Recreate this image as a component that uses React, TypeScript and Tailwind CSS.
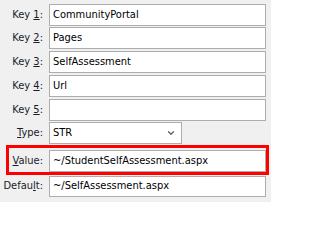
import { ChevronDown } from 'lucide-react';

const FONT = { fontFamily: '"DejaVu Sans Condensed", "DejaVu Sans", sans-serif' };

function Label({ pre, key_, post }: { pre: string; key_: string; post: string }) {
  return (
    <div className="w-[44px] shrink-0 pr-[1px] text-right text-[11px] text-[#1a1a2a] whitespace-nowrap">
      {pre}
      <span className="underline underline-offset-[1px]">{key_}</span>
      {post}
    </div>
  );
}

function TextBox({ value, h = 'h-[22px]' }: { value: string; h?: string }) {
  return (
    <div className={`ml-[5px] flex ${h} w-[217px] items-center border border-[#adadad] bg-white pl-[3px] text-[11px] text-black`}>
      {value}
    </div>
  );
}

const KEYS = [
  { n: '1', v: 'CommunityPortal', mt: 'mt-[4px]' },
  { n: '2', v: 'Pages', mt: 'mt-[1px]' },
  { n: '3', v: 'SelfAssessment', mt: 'mt-[2px]' },
  { n: '4', v: 'Url', mt: 'mt-[2px]' },
  { n: '5', v: '', mt: 'mt-[2px]' },
];

export default function App() {
  return (
    <div className="h-[202px] w-[271px] overflow-hidden bg-[#f0f0f0] font-stretch-condensed" style={FONT}>
      <div className="flex flex-col">
        {KEYS.map(k => (
          <div key={k.n} className={`flex items-center ${k.mt}`}>
            <Label pre="Key " key_={k.n} post=":" />
            <TextBox value={k.v} />
          </div>
        ))}

        <div className="mt-[1px] flex items-center">
          <Label pre="" key_="T" post="ype:" />
          <div className="ml-[5px] flex h-[22px] w-[133px] items-center justify-between border border-[#adadad] bg-white pl-[3px] pr-[5px] text-[11px] text-black">
            <span>STR</span>
            <ChevronDown size={10} strokeWidth={3} className="text-[#606060]" />
          </div>
        </div>

        <div className="ml-[6px] mt-[1px] flex h-[30px] w-[263px] items-start border-[3px] border-[#ff0000] pt-[2px]">
          <div className="-ml-[9px] flex items-center">
            <Label pre="" key_="V" post="alue:" />
            <TextBox value="~/StudentSelfAssessment.aspx" />
          </div>
        </div>

        <div className="mt-[1px] flex items-center">
          <Label pre="Defau" key_="l" post="t:" />
          <TextBox value="~/SelfAssessment.aspx" h="h-[21px]" />
        </div>
      </div>
    </div>
  );
}
